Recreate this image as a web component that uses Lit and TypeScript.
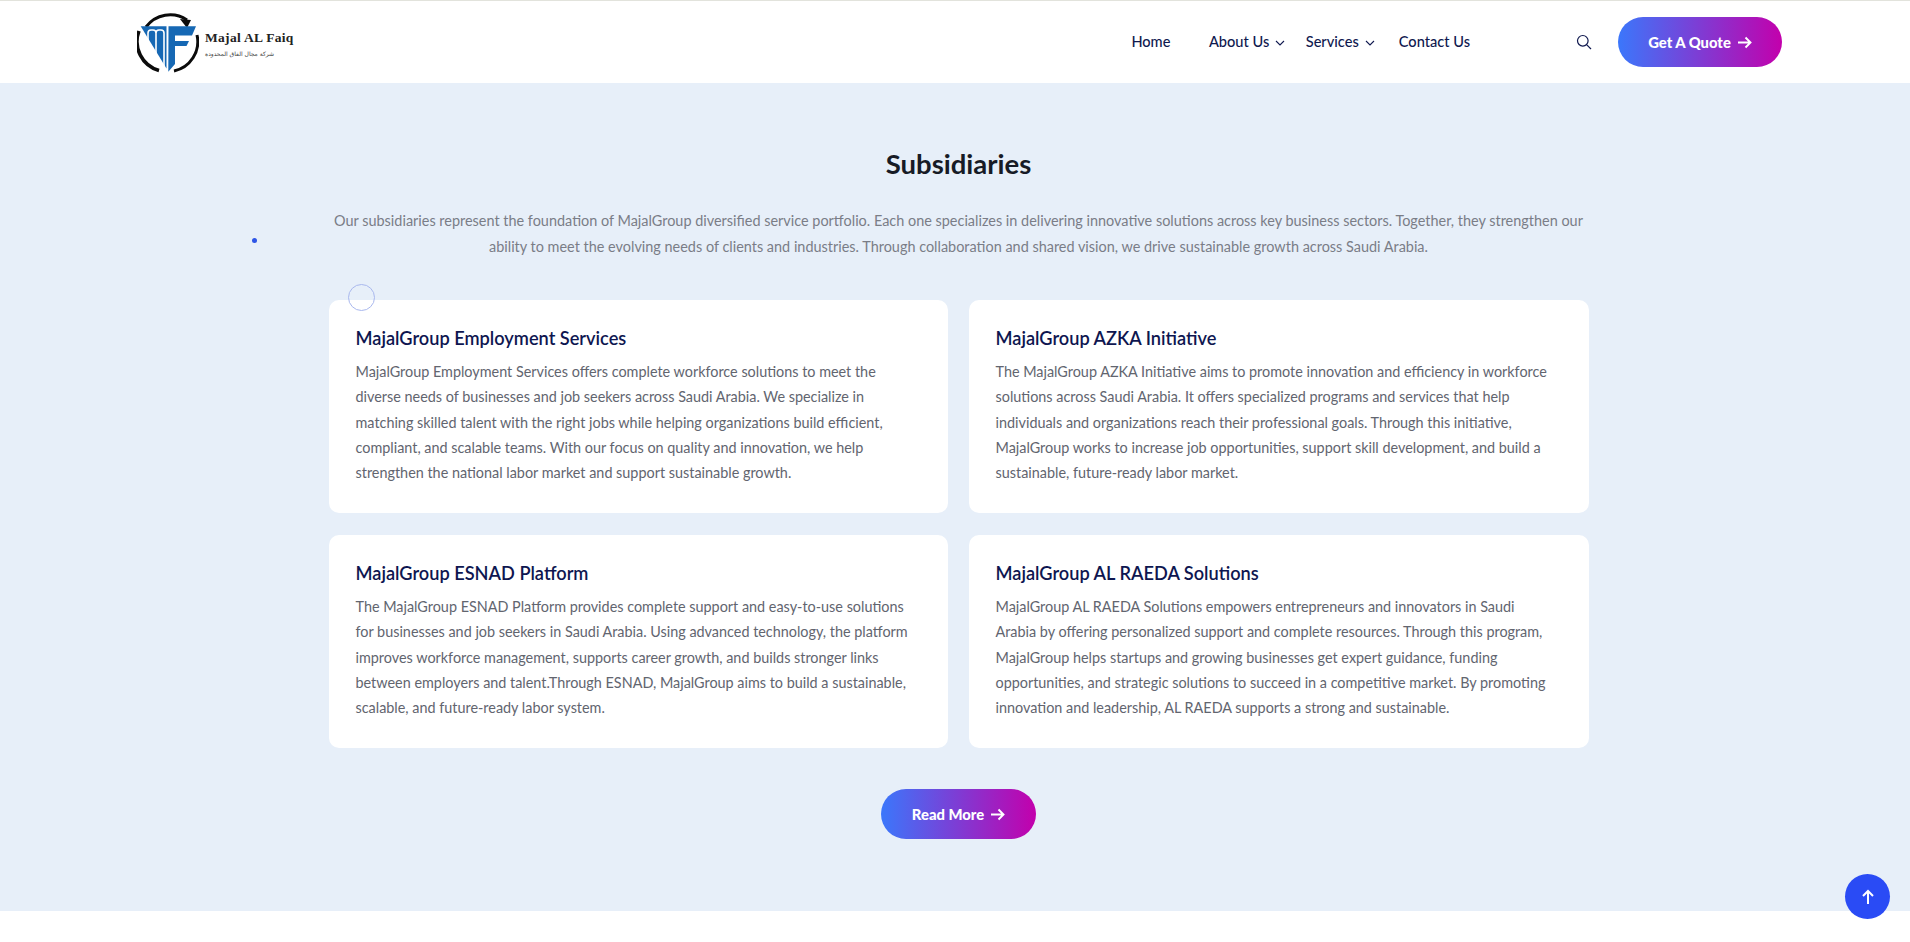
import { LitElement, html, css, svg } from 'lit';
import { customElement } from 'lit/decorators.js';

const CARDS = [
  {
    title: 'MajalGroup Employment Services',
    lines: [
      'MajalGroup Employment Services offers complete workforce solutions to meet the',
      'diverse needs of businesses and job seekers across Saudi Arabia. We specialize in',
      'matching skilled talent with the right jobs while helping organizations build efficient,',
      'compliant, and scalable teams. With our focus on quality and innovation, we help',
      'strengthen the national labor market and support sustainable growth.',
    ],
  },
  {
    title: 'MajalGroup AZKA Initiative',
    lines: [
      'The MajalGroup AZKA Initiative aims to promote innovation and efficiency in workforce',
      'solutions across Saudi Arabia. It offers specialized programs and services that help',
      'individuals and organizations reach their professional goals. Through this initiative,',
      'MajalGroup works to increase job opportunities, support skill development, and build a',
      'sustainable, future-ready labor market.',
    ],
  },
  {
    title: 'MajalGroup ESNAD Platform',
    lines: [
      'The MajalGroup ESNAD Platform provides complete support and easy-to-use solutions',
      'for businesses and job seekers in Saudi Arabia. Using advanced technology, the platform',
      'improves workforce management, supports career growth, and builds stronger links',
      'between employers and talent.Through ESNAD, MajalGroup aims to build a sustainable,',
      'scalable, and future-ready labor system.',
    ],
  },
  {
    title: 'MajalGroup AL RAEDA Solutions',
    lines: [
      'MajalGroup AL RAEDA Solutions empowers entrepreneurs and innovators in Saudi',
      'Arabia by offering personalized support and complete resources. Through this program,',
      'MajalGroup helps startups and growing businesses get expert guidance, funding',
      'opportunities, and strategic solutions to succeed in a competitive market. By promoting',
      'innovation and leadership, AL RAEDA supports a strong and sustainable.',
    ],
  },
];

const chevron = html`<svg class="chev" viewBox="0 0 10 6" width="10" height="6"><path d="M1 1l4 4 4-4" fill="none" stroke="currentColor" stroke-width="1.1"/></svg>`;
const arrow = html`<svg class="arrow" viewBox="0 0 15 13" width="15" height="13"><path d="M1 6.500h12.500M8.500 1.500l5 5-5 5" fill="none" stroke="currentColor" stroke-width="1.900"/></svg>`;

const logoMark = svg`
  <path d="M9 17A30 30 0 0 1 50 10" fill="none" stroke="#0b0b0b" stroke-width="3"/>
  <path d="M43 9l11 1-4 8z" fill="#0b0b0b"/>
  <path d="M2 21A30 30 0 0 0 22 60.500" fill="none" stroke="#0b0b0b" stroke-width="3.500"/>
  <path d="M60 25A30 30 0 0 1 37 61" fill="none" stroke="#0b0b0b" stroke-width="3"/>
  <path d="M3.700 16.300H29.500V58.500Z" fill="#1668b4"/>
  <path d="M31.500 16.300H59L55 25.500H38V31H52L49.500 36H38V54L31.300 61.700Z" fill="#1668b4"/>
  <path d="M11 33V23Q11 20 14 20H16Q19 20 19 23V48M19 23Q19 20 22 20H24Q27 20 27 23V57" fill="none" stroke="#fff" stroke-width="1.600"/>
`;

@customElement('app-root')
export class AppRoot extends LitElement {
  static styles = css`
    :host {
      display: block;
      height: 942px;
      overflow: hidden;
      background: #fff;
      font-family: Lato, 'Noto Sans', sans-serif;
      position: relative;
    }

    .header {
      height: 83px;
      border-top: 1px solid #e2e3dc;
      box-sizing: border-box;
      background: #fff;
      box-shadow: 0 1px 6px rgba(20, 30, 60, 0.1);
      display: flex;
      align-items: center;
      padding: 0 128px 0 137px;
      position: relative;
    }

    .logo {
      display: flex;
      align-items: center;
      gap: 6px;
      margin-top: -1px;
    }

    .logo-text {
      display: flex;
      flex-direction: column;
      align-items: flex-start;
      margin-top: 5px;
    }

    .logo-name {
      font: 700 13.500px 'Liberation Serif', serif;
      color: #222;
      letter-spacing: 0.3px;
    }

    .logo-sub {
      font: 6px 'DejaVu Sans', sans-serif;
      color: #444;
      line-height: 10px;
      margin-top: 3px;
    }

    nav {
      margin-left: auto;
      margin-top: -2px;
      display: flex;
      align-items: center;
      font-size: 14.600px;
      font-weight: 500;
      color: #10194f;
    }

    nav a {
      display: flex;
      align-items: center;
      white-space: nowrap;
    }

    .home {
      margin-right: 38.500px;
    }

    .about {
      margin-right: 20.500px;
    }

    .services {
      margin-right: 24px;
    }

    .chev {
      margin: 3px 0 0 6px;
    }

    .search {
      margin: 2px 15px 0 106px;
      display: block;
    }

    .btn {
      display: flex;
      align-items: center;
      justify-content: center;
      gap: 6px;
      height: 50px;
      border-radius: 25px;
      color: #fff;
      font-weight: 900;
      font-size: 14.800px;
      background: linear-gradient(90deg, #3b77fb 0%, #c300ac 100%);
      box-sizing: border-box;
      white-space: nowrap;
    }

    .quote {
      width: 164px;
      margin-left: 11px;
    }

    .section {
      height: 828px;
      box-sizing: border-box;
      padding-left: 7px;
      background: #e7eff9;
      display: flex;
      flex-direction: column;
      align-items: center;
      position: relative;
    }

    h2 {
      margin: 62px 0 0;
      font-size: 27.500px;
      line-height: 38px;
      font-weight: 700;
      color: #171b26;
    }

    .intro {
      margin: 25px 0 0;
      text-align: center;
      font-size: 14.450px;
      line-height: 25.500px;
      color: #7a7d87;
      white-space: nowrap;
    }

    .cards {
      margin: 41px 0 0 2px;
      width: 1261px;
      display: grid;
      grid-template-columns: 619px 620px;
      gap: 22px 21px;
    }

    .card {
      background: #fff;
      border-radius: 10px;
      height: 213px;
      box-sizing: border-box;
      padding: 26px 26.500px 0;
    }

    h3 {
      margin: 0 0 9px;
      font-size: 18.200px;
      line-height: 24px;
      font-weight: 600;
      color: #0e1650;
    }

    .card p {
      margin: 0;
      font-size: 14.400px;
      line-height: 25.300px;
      color: #62656f;
      white-space: nowrap;
    }

    .more {
      width: 155px;
      margin-top: 41px;
    }

    .dot {
      position: absolute;
      left: 252px;
      top: 155px;
      width: 5px;
      height: 5px;
      border-radius: 50%;
      background: #2e55e6;
    }

    .ring {
      position: absolute;
      left: 348px;
      top: 201px;
      width: 25px;
      height: 25px;
      border-radius: 50%;
      border: 1.500px solid #a9b8ee;
      box-sizing: content-box;
    }

    .top {
      position: absolute;
      left: 1845px;
      top: 874px;
      width: 45px;
      height: 45px;
      border-radius: 50%;
      background: #2a4bf5;
      display: flex;
      align-items: center;
      justify-content: center;
      color: #fff;
    }
  `;

  render() {
    return html`
      <div class="header">
        <div class="logo">
          <svg viewBox="0 0 62 63" width="62" height="63">${logoMark}</svg>
          <div class="logo-text">
            <span class="logo-name">Majal AL Faiq</span>
            <span class="logo-sub" dir="rtl" lang="ar">شركة مجال الفاق المحدودة</span>
          </div>
        </div>
        <nav>
          <a class="home">Home</a>
          <a class="about">About Us ${chevron}</a>
          <a class="services">Services ${chevron}</a>
          <a>Contact Us</a>
          <svg class="search" viewBox="0 0 16 16" width="16" height="16"><circle cx="6.800" cy="6.800" r="5.300" fill="none" stroke="#10194f" stroke-width="1.200"/><path d="M10.800 10.800L15 15" stroke="#10194f" stroke-width="1.200"/></svg>
        </nav>
        <div class="btn quote">Get A Quote ${arrow}</div>
      </div>
      <div class="section">
        <h2>Subsidiaries</h2>
        <p class="intro">
          Our subsidiaries represent the foundation of MajalGroup diversified service portfolio. Each one specializes in delivering innovative solutions across key business sectors. Together, they strengthen our<br />
          ability to meet the evolving needs of clients and industries. Through collaboration and shared vision, we drive sustainable growth across Saudi Arabia.
        </p>
        <div class="cards">
          ${CARDS.map(
            (c) => html`
              <div class="card">
                <h3>${c.title}</h3>
                <p>${c.lines.map((l) => html`${l}<br />`)}</p>
              </div>
            `
          )}
        </div>
        <div class="btn more">Read More ${arrow}</div>
        <span class="dot"></span>
        <span class="ring"></span>
      </div>
      <div class="top">
        <svg viewBox="0 0 14 16" width="14" height="16"><path d="M7 15V2M2 7l5-5 5 5" fill="none" stroke="currentColor" stroke-width="2"/></svg>
      </div>
    `;
  }
}
